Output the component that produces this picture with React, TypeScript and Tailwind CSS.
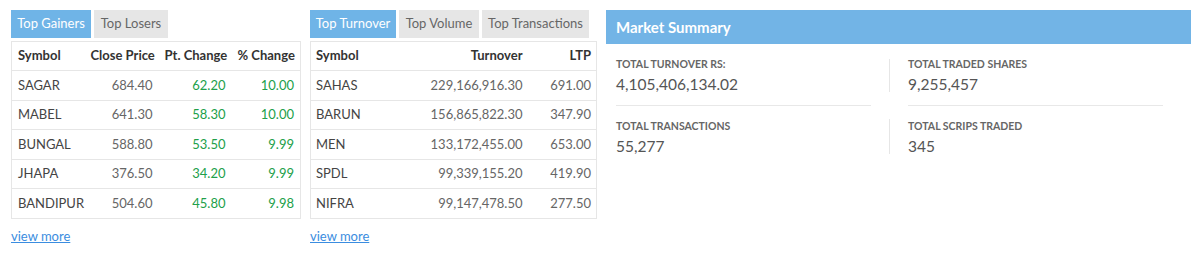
import React from "react";

const gainers = [
  ["SAGAR", "684.40", "62.20", "10.00"],
  ["MABEL", "641.30", "58.30", "10.00"],
  ["BUNGAL", "588.80", "53.50", "9.99"],
  ["JHAPA", "376.50", "34.20", "9.99"],
  ["BANDIPUR", "504.60", "45.80", "9.98"],
];

const turnover = [
  ["SAHAS", "229,166,916.30", "691.00"],
  ["BARUN", "156,865,822.30", "347.90"],
  ["MEN", "133,172,455.00", "653.00"],
  ["SPDL", "99,339,155.20", "419.90"],
  ["NIFRA", "99,147,478.50", "277.50"],
];

function Tab({ label, active, w }: { label: string; active?: boolean; w: string }) {
  return (
    <div
      className={
        "h-[28px] flex items-center justify-center whitespace-nowrap text-[13px] " +
        w +
        " " +
        (active ? "bg-[#6fb4e7] text-white" : "bg-[#e6e6e6] text-[#666]")
      }
    >
      {label}
    </div>
  );
}

function Stat({ label, value }: { label: string; value: string }) {
  return (
    <div className="flex flex-col">
      <div className="text-[10.5px] font-bold text-[#666] leading-[14px]">{label}</div>
      <div className="text-[15.5px] text-[#555] leading-[20px] mt-[3px]">{value}</div>
    </div>
  );
}

export default function App() {
  return (
    <div
      className="w-[1200px] h-[256px] bg-white flex pt-[10px] pl-[11px]"
      style={{ fontFamily: "Lato, 'Noto Sans', sans-serif" }}
    >
      {/* Gainers */}
      <div className="w-[289px] flex flex-col">
        <div className="flex gap-[3px]">
          <Tab label="Top Gainers" active w="w-[80px]" />
          <Tab label="Top Losers" w="w-[74px]" />
        </div>
        <table className="mt-[3px] border-collapse border border-[#e6e6e6] text-[13px] table-fixed w-[289px]">
          <colgroup>
            <col className="w-[73px]" />
            <col className="w-[74px]" />
            <col className="w-[73px]" />
            <col className="w-[69px]" />
          </colgroup>
          <thead>
            <tr className="h-[29px] border-b border-[#e6e6e6] text-[#333] font-bold">
              <th className="text-left px-[6px] font-bold">Symbol</th>
              <th className="text-right px-[6px] font-bold whitespace-nowrap">Close Price</th>
              <th className="text-right px-[6px] font-bold whitespace-nowrap">Pt. Change</th>
              <th className="text-right px-[6px] font-bold whitespace-nowrap">% Change</th>
            </tr>
          </thead>
          <tbody>
            {gainers.map((r) => (
              <tr key={r[0]} className="h-[29.5px] border-b border-[#e6e6e6]">
                <td className="px-[6px] text-[#444]">{r[0]}</td>
                <td className="px-[6px] text-right text-[#666]">{r[1]}</td>
                <td className="px-[6px] text-right text-[#21a04a]">{r[2]}</td>
                <td className="px-[6px] text-right text-[#21a04a]">{r[3]}</td>
              </tr>
            ))}
          </tbody>
        </table>
        <a className="mt-[9px] text-[13px] text-[#3b8de0] underline w-fit leading-[16px]">view more</a>
      </div>

      {/* Turnover */}
      <div className="w-[286px] ml-[10px] flex flex-col">
        <div className="flex gap-[3px]">
          <Tab label="Top Turnover" active w="w-[86px]" />
          <Tab label="Top Volume" w="w-[80px]" />
          <Tab label="Top Transactions" w="w-[107px]" />
        </div>
        <table className="mt-[3px] border-collapse border border-[#e6e6e6] text-[13px] table-fixed w-[286px]">
          <colgroup>
            <col className="w-[100px]" />
            <col className="w-[118px]" />
            <col className="w-[68px]" />
          </colgroup>
          <thead>
            <tr className="h-[29px] border-b border-[#e6e6e6] text-[#333]">
              <th className="text-left px-[5px] font-bold">Symbol</th>
              <th className="text-right px-[6px] font-bold">Turnover</th>
              <th className="text-right px-[5px] font-bold">LTP</th>
            </tr>
          </thead>
          <tbody>
            {turnover.map((r) => (
              <tr key={r[0]} className="h-[29.5px] border-b border-[#e6e6e6]">
                <td className="px-[5px] text-[#444]">{r[0]}</td>
                <td className="px-[6px] text-right text-[#666]">{r[1]}</td>
                <td className="px-[5px] text-right text-[#666]">{r[2]}</td>
              </tr>
            ))}
          </tbody>
        </table>
        <a className="mt-[9px] text-[13px] text-[#3b8de0] underline w-fit leading-[16px]">view more</a>
      </div>

      {/* Market Summary */}
      <div className="w-[585px] ml-[10px] flex flex-col">
        <div className="h-[34px] bg-[#72b4e6] flex items-center px-[10px] text-white font-bold text-[15px]">
          Market Summary
        </div>
        <div className="grid grid-cols-[255px_37px_255px] pl-[10px] mt-[13px]">
          <div className="pb-[11px] border-b border-[#e8e8e8]">
            <Stat label="TOTAL TURNOVER RS:" value="4,105,406,134.02" />
          </div>
          <div className="flex justify-center">
            <div className="w-px h-[33px] bg-[#e6e6e6] mt-[2px]" />
          </div>
          <div className="pb-[11px] border-b border-[#e8e8e8]">
            <Stat label="TOTAL TRADED SHARES" value="9,255,457" />
          </div>
          <div className="pt-[13px]">
            <Stat label="TOTAL TRANSACTIONS" value="55,277" />
          </div>
          <div className="flex justify-center">
            <div className="w-px h-[35px] bg-[#e6e6e6] mt-[13px]" />
          </div>
          <div className="pt-[13px]">
            <Stat label="TOTAL SCRIPS TRADED" value="345" />
          </div>
        </div>
      </div>
    </div>
  );
}
